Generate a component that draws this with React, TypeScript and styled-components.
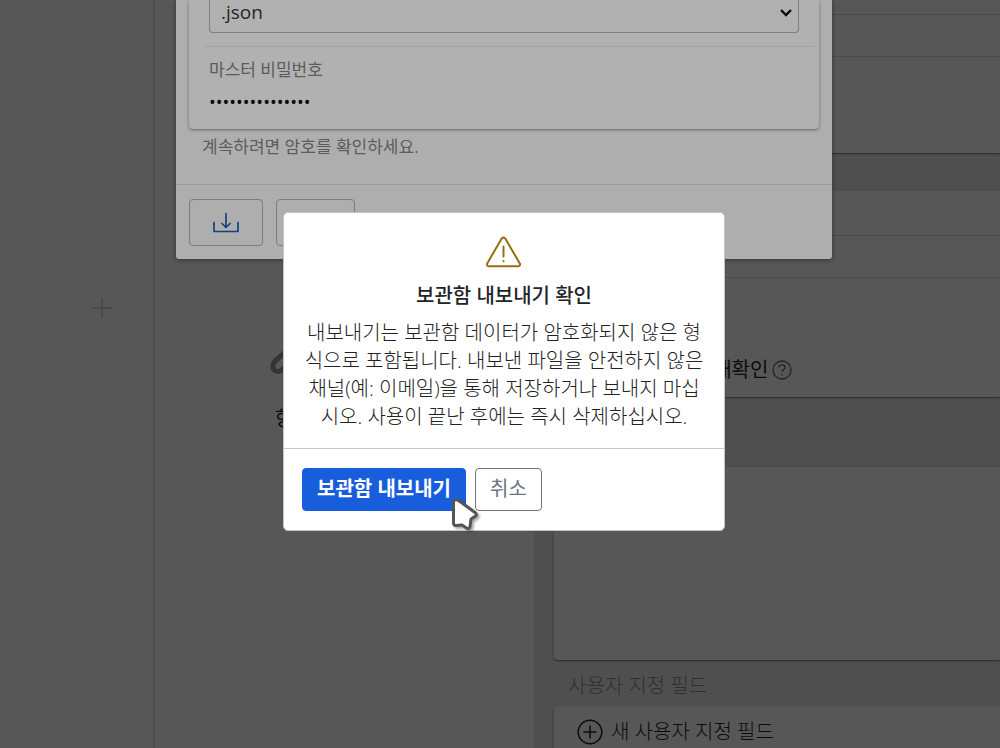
import React from "react";
import styled, { createGlobalStyle, css } from "styled-components";

const GlobalStyle = createGlobalStyle`
  *, *::before, *::after { box-sizing: border-box; }
  body {
    margin: 0;
    background: #575757;
    font-family: "Open Sans", "Noto Sans CJK KR", sans-serif;
    font-size: 20px;
    line-height: 28px;
  }
  button, input, select { font: inherit; color: inherit; margin: 0; }
`;

const Screen = styled.div`
  position: relative;
  height: 100vh;
  overflow: hidden;
`;

const Vault = styled.main`
  display: grid;
  grid-template-columns: 155px 379px minmax(0, 1fr);
  height: 100%;
  background: #575757;
  color: #0c0c0c;
  font-weight: 300;
`;

const Sidebar = styled.nav`
  display: flex;
  flex-direction: column;
  align-items: flex-end;
  padding: 298px 41px 0 0;
  border-right: 2px solid #4b4b4b;
`;

const AddFolder = styled.button`
  display: flex;
  padding: 0;
  border: 0;
  background: none;
  color: #3f3f3f;
`;

const ItemList = styled.section`
  display: flex;
  flex-direction: column;
  align-items: center;
  gap: 24px;
  padding-top: 342px;
`;

const EmptyText = styled.p`
  margin: 0;
  font-weight: 400;
`;

const Details = styled.section`
  display: flex;
  flex-direction: column;
  padding-left: 20px;
  background: #4f4f4f;
  overflow: hidden;
`;

const DetailCard = styled.div<{ $gap: number }>`
  flex: none;
  margin-bottom: ${(p) => p.$gap}px;
  border-radius: 4px 0 0 4px;
  background: #575757;
  box-shadow: 0 1px 2px #2b2b2b;
`;

const DetailRow = styled.div<{ $height: number; $last?: boolean }>`
  display: flex;
  align-items: flex-end;
  height: ${(p) => p.$height}px;
  padding: 0 4px;
  ${(p) => !p.$last && css`border-bottom: 1px solid #4a4a4a;`}
`;

const PromptRow = styled.div`
  display: flex;
  align-items: center;
  gap: 4px;
  padding-bottom: 13px;
  font-weight: 400;

  label { display: flex; align-items: center; gap: 2px; }
  input { width: 14px; height: 14px; }
`;

const IconButton = styled.button`
  display: flex;
  padding: 0;
  border: 0;
  background: none;
  color: #242424;
`;

const SectionTitle = styled.h2`
  margin: 0 0 6px 14px;
  color: #303030;
  font-size: 20px;
  font-weight: 300;
`;

const NewField = styled.button`
  display: flex;
  align-items: center;
  gap: 8px;
  padding: 12px 23px;
  border: 0;
  background: none;
`;

const Layer = styled.div<{ $center?: boolean }>`
  position: absolute;
  inset: 0;
  display: flex;
  justify-content: center;
  align-items: ${(p) => (p.$center ? "center" : "flex-start")};
  padding: 0 0 ${(p) => (p.$center ? 6 : 0)}px 8px;
`;

const ExportDialog = styled.section`
  width: 656px;
  border-radius: 0 0 3px 3px;
  background: #aeaeae;
  box-shadow: 0 1px 4px #333;
`;

const ExportBody = styled.div`
  padding: 0 13px 23px;
  border-bottom: 1px solid #9c9c9c;
`;

const FormCard = styled.div`
  padding: 0 4px 9px 16px;
  border-radius: 0 0 4px 4px;
  background: #b1b1b1;
  box-shadow: 0 1px 3px #666;
`;

const FormatRow = styled.div`
  position: relative;
  height: 47px;
  padding-right: 16px;
  padding-left: 4px;
  border-bottom: 1px solid #a5a5a5;

  svg {
    position: absolute;
    top: 7px;
    right: 22px;
    pointer-events: none;
  }
`;

const FormatSelect = styled.select`
  display: block;
  appearance: none;
  width: 100%;
  height: 33px;
  padding: 0 11px 8px;
  border: 1px solid #7d7d7d;
  border-top: 0;
  border-radius: 0 0 4px 4px;
  background: transparent;
  color: #262626;
  font-size: 19px;
  line-height: 24px;
`;

const PasswordField = styled.div`
  display: flex;
  flex-direction: column;
  padding: 9px 4px 0;

  label { color: #5c5c5c; font-size: 17px; }
  input {
    width: 100%;
    height: 36px;
    padding: 0;
    border: 0;
    background: none;
    color: #0c0c0c;
    font-size: 18px;
  }
`;

const Hint = styled.p`
  margin: 4px 0 0 13px;
  color: #5c5c5c;
  font-size: 17px;
`;

const ExportFooter = styled.footer`
  display: flex;
  gap: 13px;
  padding: 14px 13px 13px;
`;

const FooterButton = styled.button<{ $width: number }>`
  display: flex;
  align-items: center;
  justify-content: center;
  width: ${(p) => p.$width}px;
  height: 47px;
  padding: 0;
  border: 1px solid #7d7d7d;
  border-radius: 4px;
  background: transparent;
  color: #4a4a4a;
`;

const ConfirmDialog = styled.section`
  position: relative;
  width: 442px;
  border: 1px solid #c4c4c4;
  border-radius: 5px;
  background: #fff;
  color: #222;
`;

const ConfirmBody = styled.div`
  display: flex;
  flex-direction: column;
  align-items: center;
  padding: 23px 19px 17px;
  border-bottom: 1px solid #c9c9c9;
  text-align: center;

  h1 {
    margin: 14px 0 9px;
    color: #212529;
    font-size: 20px;
    font-weight: 500;
  }
  p { margin: 0; font-weight: 300; }
`;

const ConfirmFooter = styled.footer`
  display: flex;
  gap: 9px;
  padding: 19px 18px;
`;

const ActionButton = styled.button<{ $primary?: boolean }>`
  height: 43px;
  padding: 0 14px;
  border: 1px solid ${(p) => (p.$primary ? "#175ddc" : "#6f747a")};
  border-radius: 4px;
  background: ${(p) => (p.$primary ? "#175ddc" : "#fff")};
  color: ${(p) => (p.$primary ? "#fff" : "#6c757d")};
  font-weight: ${(p) => (p.$primary ? 700 : 400)};
`;

const Pointer = styled.svg`
  position: absolute;
  left: 166px;
  top: 283px;
  pointer-events: none;
  filter: drop-shadow(2px 2px 1px #0005);
`;

export default function App() {
  return (
    <Screen lang="ko">
      <GlobalStyle />
      <Vault>
        <Sidebar>
          <AddFolder aria-label="폴더 추가">
            <svg width="20" height="20" viewBox="0 0 20 20" stroke="currentColor">
              <path d="M10 0v20M0 10h20" />
            </svg>
          </AddFolder>
        </Sidebar>
        <ItemList>
          <svg width="150" height="39" viewBox="0 0 150 39" fill="none" stroke="#343434" strokeWidth="5" strokeLinecap="round">
            <path d="M20 6L5.5 18.5C1.5 23 2.5 27 5 28.5C8 30.5 11 29 13 27L26 15" />
          </svg>
          <EmptyText>항목이 없습니다.</EmptyText>
        </ItemList>
        <Details>
          <DetailCard $gap={38}>
            <DetailRow $height={15} />
            <DetailRow $height={42} />
            <DetailRow $height={96} $last />
          </DetailCard>
          <DetailCard $gap={70}>
            <DetailRow $height={45} />
            <DetailRow $height={42} />
            <DetailRow $height={119} $last>
              <PromptRow>
                <label>
                  <input type="checkbox" />
                  마스터 비밀번호 재확인
                </label>
                <IconButton aria-label="도움말">
                  <svg width="20" height="20" viewBox="0 0 20 20" fill="none" stroke="currentColor" strokeWidth="1.3">
                    <circle cx="10" cy="10" r="9" />
                    <path d="M7 7.5C7 4 13 4 13 7.5C13 9.8 10 9.5 10 12M10 14v1.4" />
                  </svg>
                </IconButton>
              </PromptRow>
            </DetailRow>
          </DetailCard>
          <DetailCard $gap={12}>
            <DetailRow $height={193} $last />
          </DetailCard>
          <SectionTitle>사용자 지정 필드</SectionTitle>
          <DetailCard $gap={0}>
            <NewField>
              <svg width="26" height="26" viewBox="0 0 26 26" fill="none" stroke="currentColor" strokeWidth="1.5">
                <circle cx="13" cy="13" r="11.8" />
                <path d="M13 6.5v13M6.5 13h13" />
              </svg>
              새 사용자 지정 필드
            </NewField>
          </DetailCard>
        </Details>
      </Vault>

      <Layer>
        <ExportDialog role="dialog" aria-label="보관함 내보내기">
          <ExportBody>
            <FormCard>
              <FormatRow>
                <FormatSelect aria-label="파일 형식" defaultValue=".json">
                  <option>.json</option>
                </FormatSelect>
                <svg width="14" height="11" viewBox="0 0 14 11" fill="none" stroke="#0a0a0a" strokeWidth="2.4">
                  <path d="M2 3l5 5l5-5" />
                </svg>
              </FormatRow>
              <PasswordField>
                <label htmlFor="master">마스터 비밀번호</label>
                <input id="master" type="password" defaultValue="masterpassword1" />
              </PasswordField>
            </FormCard>
            <Hint>계속하려면 암호를 확인하세요.</Hint>
          </ExportBody>
          <ExportFooter>
            <FooterButton $width={74} aria-label="내보내기">
              <svg width="28" height="22" viewBox="0 0 28 22" fill="none" stroke="#17407f" strokeWidth="1.7" strokeLinecap="round" strokeLinejoin="round">
                <path d="M2 10.5V19.5H26V10.5M14 1.5V15M10 11.5L14 15.5L18 11.5" />
              </svg>
            </FooterButton>
            <FooterButton $width={79}>취소</FooterButton>
          </ExportFooter>
        </ExportDialog>
      </Layer>

      <Layer $center>
        <ConfirmDialog role="alertdialog" aria-labelledby="confirm-title">
          <ConfirmBody>
            <svg width="36" height="32" viewBox="0 0 36 32" fill="none" stroke="#94700f" strokeWidth="2" strokeLinejoin="round" strokeLinecap="round">
              <path d="M15.7 2.6Q17.5 0.4 19.3 2.6L33.8 27.4Q34.7 30 32.3 30.2H2.7Q0.3 30 1.2 27.4Z" />
              <path d="M17.5 10.5V20.5M17.5 25V25.2" />
            </svg>
            <h1 id="confirm-title">보관함 내보내기 확인</h1>
            <p>
              내보내기는 보관함 데이터가 암호화되지 않은 형식으로 포함됩니다. 내보낸 파일을 안전하지 않은
              채널(예: 이메일)을 통해 저장하거나 보내지 마십시오. 사용이 끝난 후에는 즉시 삭제하십시오.
            </p>
          </ConfirmBody>
          <ConfirmFooter>
            <ActionButton $primary>보관함 내보내기</ActionButton>
            <ActionButton>취소</ActionButton>
          </ConfirmFooter>
          <Pointer width="32" height="38" viewBox="0 0 32 38" aria-hidden="true">
            <path
              d="M3.5 6Q4.5 2.5 8.5 4.5L25 16.5Q27.5 18.5 25.5 20L21 23L20 30.5Q19 33.5 16.5 32L12 29L6 29.5Q3.5 29.5 3.5 27Z"
              fill="#fff"
              stroke="#555"
              strokeWidth="3"
              strokeLinejoin="round"
            />
          </Pointer>
        </ConfirmDialog>
      </Layer>
    </Screen>
  );
}
